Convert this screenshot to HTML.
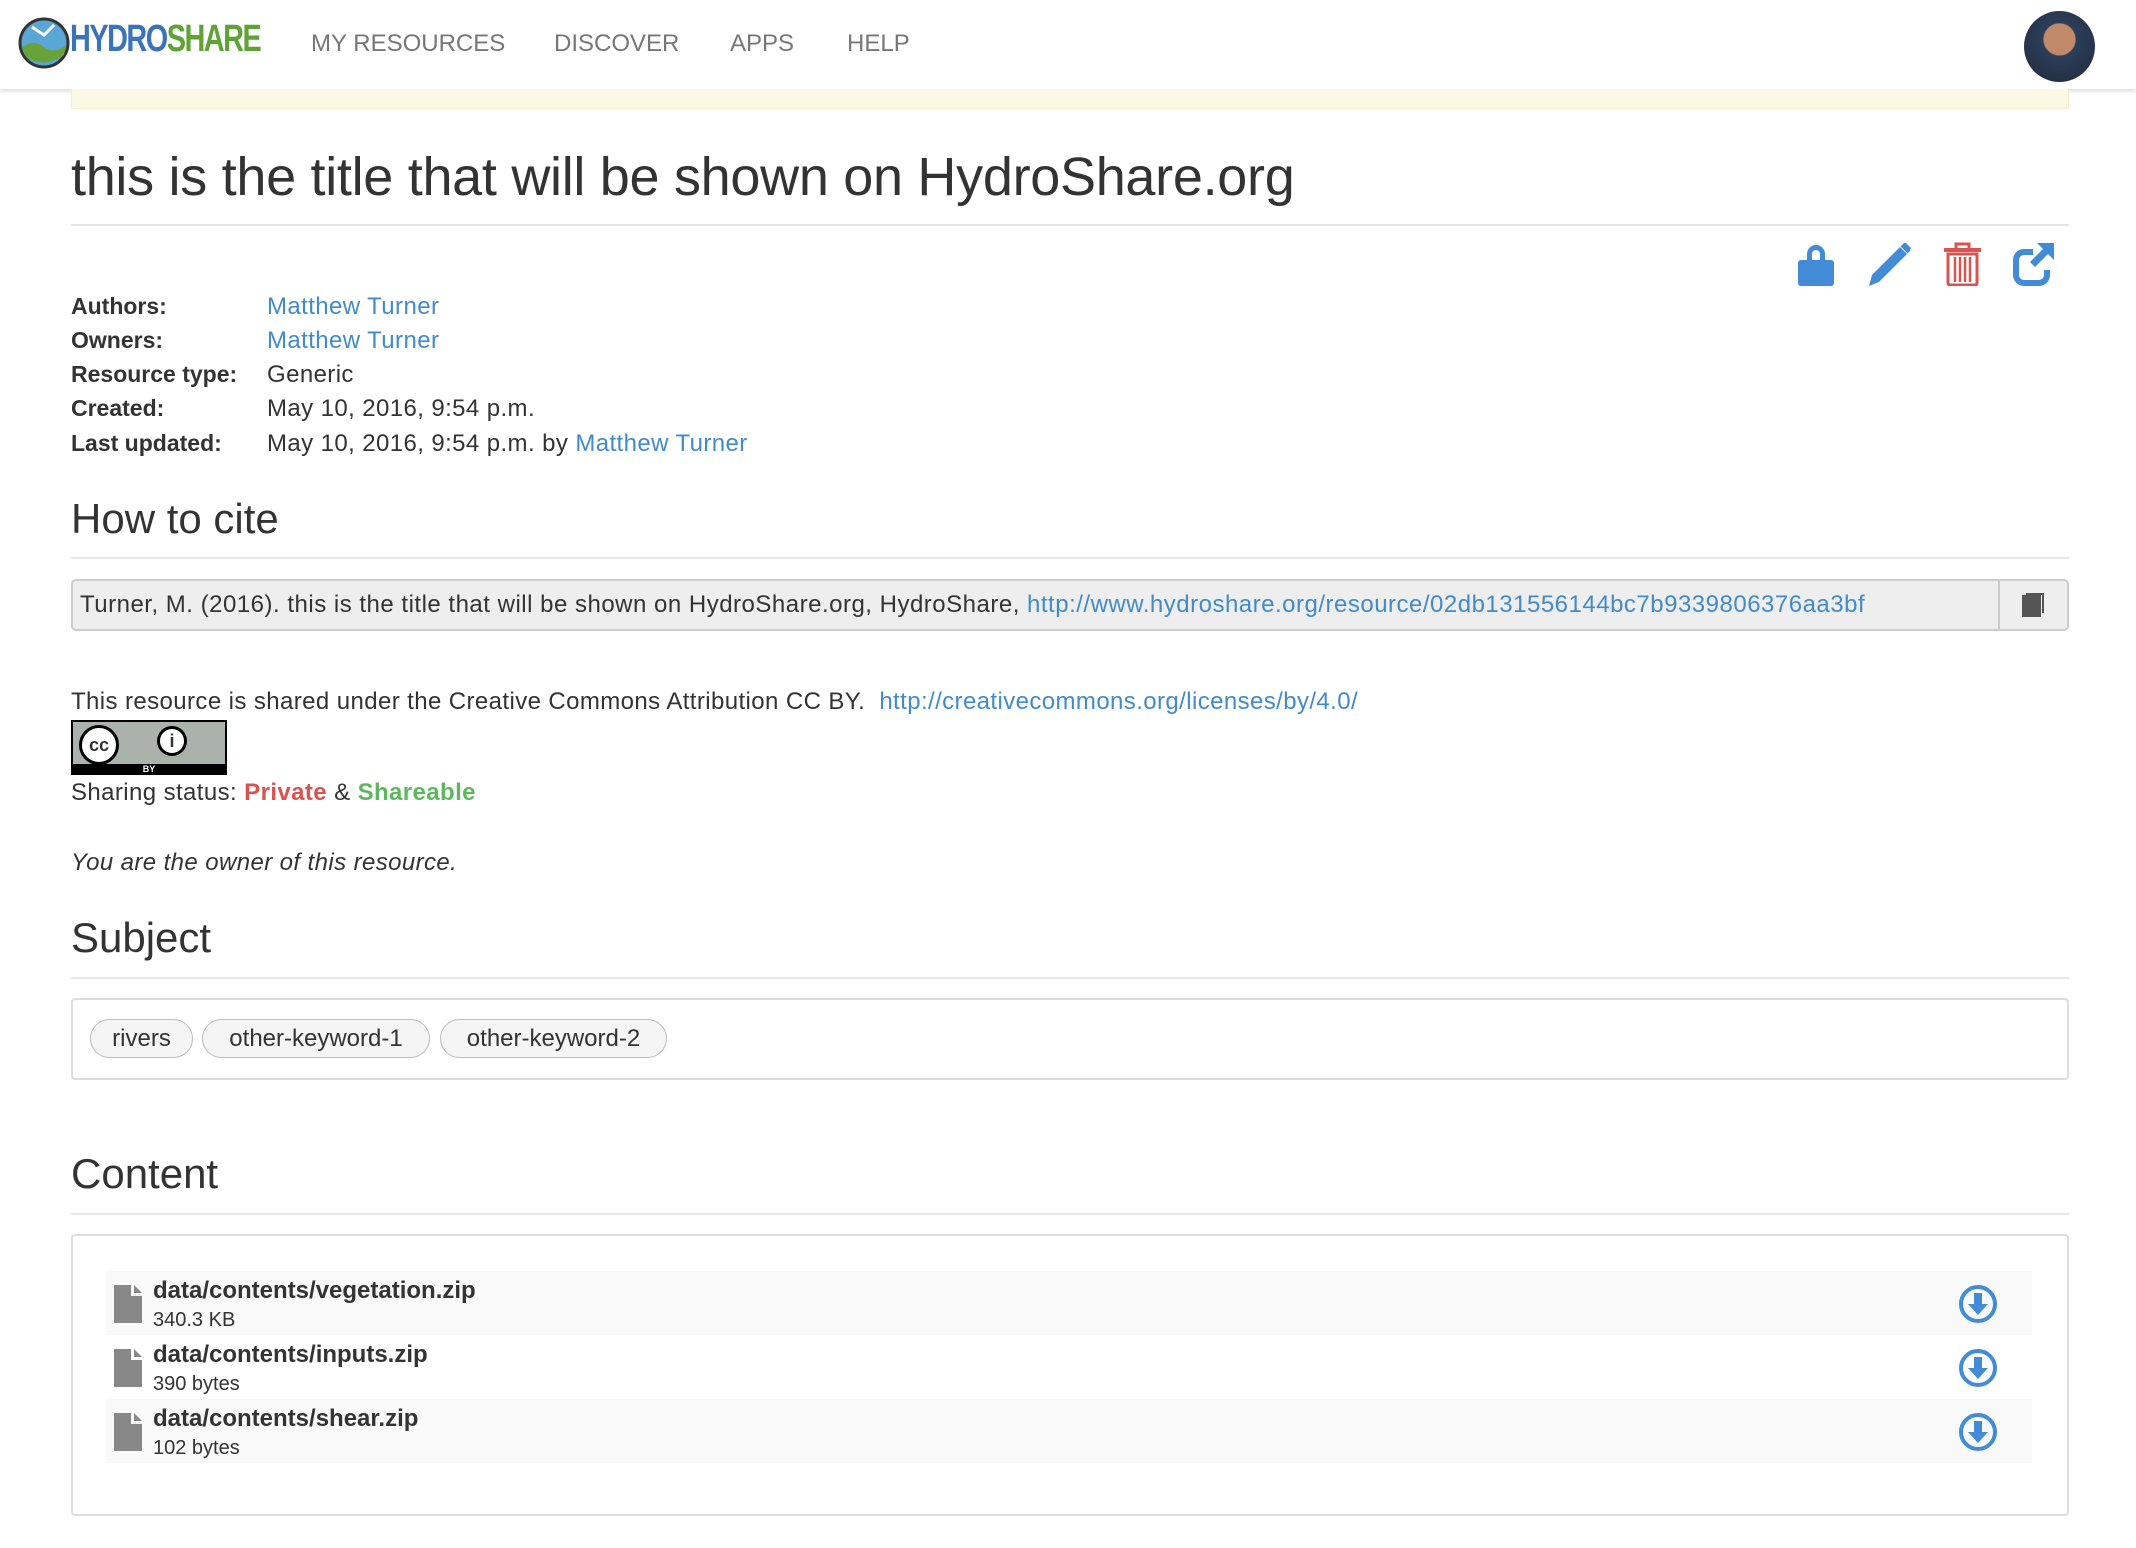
<!DOCTYPE html>
<html><head><meta charset="utf-8"><style>
*{box-sizing:border-box;margin:0;padding:0}
body{width:2136px;height:1548px;background:#fff;font-family:"Liberation Sans",sans-serif;color:#333;position:relative;overflow:hidden}
.a{position:absolute;white-space:nowrap}
.nav{position:absolute;left:0;top:0;width:2136px;height:89px;background:#fff;box-shadow:0 2px 4px rgba(0,0,0,.15)}
.ni{position:absolute;top:30px;font-size:24px;color:#777}
.lnk{color:#428bca}
.hr{position:absolute;left:71px;width:1998px;height:2px;background:#e6e6e6}
.lab{font-weight:bold;font-size:23px}
.val{font-size:24px;letter-spacing:0.4px}
h2{font-weight:normal;font-size:42px;color:#333}
.pill{position:absolute;top:1019px;height:39px;border:1px solid #bbb;border-radius:20px;background:#f5f5f5;font-size:24px;line-height:37px;text-align:center}
.row{position:absolute;left:106px;width:1926px;height:64px}
.fn{position:absolute;left:47px;top:6px;font-size:24px;font-weight:bold}
.fs{position:absolute;left:47px;top:38px;font-size:20px}
</style></head><body>
<div class="nav">
<svg class="a" style="left:18px;top:17px" width="52" height="52" viewBox="0 0 52 52"><circle cx="26" cy="26" r="24" fill="#5aa6d6" stroke="#333" stroke-width="3"/><path d="M4 30 Q16 22 26 30 T48 28 L46 38 Q26 52 8 40Z" fill="#6aa23a"/><path d="M14 10 L26 18 L36 8" stroke="#fff" stroke-width="3" fill="none"/></svg>
<div class="a" style="left:70px;top:18px;font-size:38px;font-weight:bold;letter-spacing:-2px;transform:scaleX(.76);transform-origin:left"><span style="color:#3b73b9">HYDRO</span><span style="color:#5ea334">SHARE</span></div>
<div class="ni" style="left:311px">MY RESOURCES</div>
<div class="ni" style="left:554px">DISCOVER</div>
<div class="ni" style="left:730px">APPS</div>
<div class="ni" style="left:847px">HELP</div>
<div class="a" style="left:2024px;top:11px;width:71px;height:71px;border-radius:50%;background:radial-gradient(circle at 50% 40%,#c08a6a 0 28%,#2d3e5a 30%,#1f2a3a 100%)"></div>
</div>
<div class="a" style="left:71px;top:89px;width:1998px;height:20px;background:#fcf8e3;border:1px solid #faebcc;border-top:none"></div>
<div class="a" style="left:71px;top:146px;font-size:54px;color:#333;letter-spacing:-0.3px">this is the title that will be shown on HydroShare.org</div>
<div class="hr" style="top:224px"></div>
<svg class="a" style="left:1798px;top:243px" width="36" height="43" viewBox="0 0 36 43"><path d="M9 18 V11 a9 9 0 0 1 18 0 V18 h-5 V11 a4 4 0 0 0 -8 0 V18Z" fill="#428bd6"/><rect x="0" y="17" width="36" height="26" rx="3" fill="#428bd6"/></svg>
<svg class="a" style="left:1869px;top:243px" width="42" height="43" viewBox="0 0 42 43"><path d="M0 43 L3 32 L31 4 L38 11 L10 39Z M34 1 L36 -1 L42 5 L40 8Z" fill="#428bd6"/><path d="M33 2 L40 9" stroke="#428bd6" stroke-width="4"/></svg>
<svg class="a" style="left:1944px;top:241px" width="37" height="45" viewBox="0 0 37 45"><rect x="0" y="7" width="37" height="4" fill="#d9534f"/><path d="M12 8 V3 h13 v5" stroke="#d9534f" stroke-width="3" fill="none"/><path d="M4 13 h29 v29 a2 2 0 0 1 -2 2 h-25 a2 2 0 0 1 -2 -2Z" fill="none" stroke="#d9534f" stroke-width="3"/><path d="M11 16v25M16 16v25M21 16v25M26 16v25" stroke="#d9534f" stroke-width="2.5"/></svg>
<svg class="a" style="left:2013px;top:243px" width="41" height="43" viewBox="0 0 41 43"><path d="M20 9 H11 a8 8 0 0 0 -8 8 v15 a8 8 0 0 0 8 8 h15 a8 8 0 0 0 8 -8 v-5" stroke="#428bd6" stroke-width="6" fill="none"/><path d="M24 0 H41 V17 L35 11 L22 24 L17 19 L30 6Z" fill="#428bd6"/></svg>
<div class="a lab" style="left:71px;top:293px">Authors:</div><div class="a val lnk" style="left:267px;top:293px">Matthew Turner</div>
<div class="a lab" style="left:71px;top:327px">Owners:</div><div class="a val lnk" style="left:267px;top:327px">Matthew Turner</div>
<div class="a lab" style="left:71px;top:361px">Resource type:</div><div class="a val" style="left:267px;top:361px">Generic</div>
<div class="a lab" style="left:71px;top:395px">Created:</div><div class="a val" style="left:267px;top:395px">May 10, 2016, 9:54 p.m.</div>
<div class="a lab" style="left:71px;top:430px">Last updated:</div><div class="a val" style="left:267px;top:430px">May 10, 2016, 9:54 p.m. by <span class="lnk">Matthew Turner</span></div>
<h2 class="a" style="left:71px;top:495px">How to cite</h2>
<div class="hr" style="top:557px"></div>
<div class="a" style="left:71px;top:579px;width:1998px;height:52px;background:#eee;border:2px solid #ccc;border-radius:5px"></div>
<div class="a" style="left:1998px;top:579px;width:2px;height:52px;background:#ccc"></div>
<div class="a" style="left:80px;top:591px;font-size:24px;letter-spacing:0.5px">Turner, M. (2016). this is the title that will be shown on HydroShare.org, HydroShare, <span class="lnk">http://www.hydroshare.org/resource/02db131556144bc7b9339806376aa3bf</span></div>
<svg class="a" style="left:2022px;top:591px" width="24" height="26" viewBox="0 0 24 26"><path d="M4 2 h18 v20 h-2 v-18 h-16Z" fill="#555"/><rect x="0" y="4" width="19" height="22" fill="#555"/></svg>
<div class="a" style="left:71px;top:688px;font-size:24px;letter-spacing:0.4px">This resource is shared under the Creative Commons Attribution CC BY. &nbsp;<span class="lnk">http://creativecommons.org/licenses/by/4.0/</span></div>
<div class="a" style="left:71px;top:720px;width:156px;height:55px;background:#aab2ab;border:2px solid #000">
<div class="a" style="left:0;top:42px;width:152px;height:11px;background:#000;color:#fff;font-size:9px;text-align:center;line-height:11px;font-weight:bold">BY</div>
<div class="a" style="left:6px;top:3px;width:40px;height:40px;border-radius:50%;background:#fff;border:3px solid #000;font-weight:bold;font-size:18px;line-height:34px;text-align:center">cc</div>
<div class="a" style="left:84px;top:4px;width:30px;height:30px;border-radius:50%;background:#fff;border:3px solid #000;font-size:18px;line-height:24px;text-align:center;font-weight:bold">i</div>
</div>
<div class="a val" style="left:71px;top:779px">Sharing status: <b style="color:#d9534f">Private</b> &amp; <b style="color:#5cb85c">Shareable</b></div>
<div class="a val" style="left:71px;top:849px;font-style:italic">You are the owner of this resource.</div>
<h2 class="a" style="left:71px;top:914px">Subject</h2>
<div class="hr" style="top:977px"></div>
<div class="a" style="left:71px;top:998px;width:1998px;height:82px;border:2px solid #ddd;border-radius:4px"></div>
<div class="pill" style="left:90px;width:103px">rivers</div>
<div class="pill" style="left:202px;width:228px">other-keyword-1</div>
<div class="pill" style="left:440px;width:227px">other-keyword-2</div>
<h2 class="a" style="left:71px;top:1150px">Content</h2>
<div class="hr" style="top:1213px"></div>
<div class="a" style="left:71px;top:1234px;width:1998px;height:282px;border:2px solid #ddd;border-radius:4px"></div>
<div class="row" style="top:1271px;background:#f9f9f9"><svg class="a" style="left:8px;top:14px" width="28" height="38" viewBox="0 0 28 38"><path d="M0 0 H17 V11 H28 V38 H0Z M20 0 L28 8 H20Z" fill="#888"/></svg><div class="fn">data/contents/vegetation.zip</div><div class="fs">340.3 KB</div></div>
<div class="row" style="top:1335px"><svg class="a" style="left:8px;top:14px" width="28" height="38" viewBox="0 0 28 38"><path d="M0 0 H17 V11 H28 V38 H0Z M20 0 L28 8 H20Z" fill="#888"/></svg><div class="fn">data/contents/inputs.zip</div><div class="fs">390 bytes</div></div>
<div class="row" style="top:1399px;background:#f9f9f9"><svg class="a" style="left:8px;top:14px" width="28" height="38" viewBox="0 0 28 38"><path d="M0 0 H17 V11 H28 V38 H0Z M20 0 L28 8 H20Z" fill="#888"/></svg><div class="fn">data/contents/shear.zip</div><div class="fs">102 bytes</div></div>
<svg class="a" style="left:1957px;top:1283px" width="42" height="170" viewBox="0 0 42 170">
<g><circle cx="21" cy="21" r="17" fill="none" stroke="#428bd6" stroke-width="4"/><path d="M17 10 h8 v11 h6 l-10 11 l-10 -11 h6Z" fill="#428bd6"/></g>
<g transform="translate(0,64)"><circle cx="21" cy="21" r="17" fill="none" stroke="#428bd6" stroke-width="4"/><path d="M17 10 h8 v11 h6 l-10 11 l-10 -11 h6Z" fill="#428bd6"/></g>
<g transform="translate(0,128)"><circle cx="21" cy="21" r="17" fill="none" stroke="#428bd6" stroke-width="4"/><path d="M17 10 h8 v11 h6 l-10 11 l-10 -11 h6Z" fill="#428bd6"/></g>
</svg>
</body></html>
